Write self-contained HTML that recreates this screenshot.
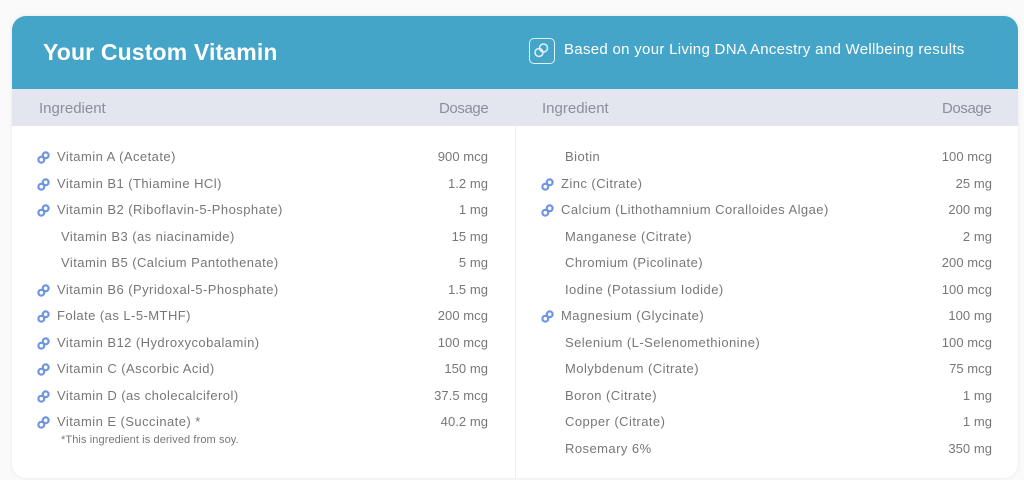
<!DOCTYPE html>
<html><head><style>
body{margin:0;width:1024px;height:480px;background:#fafafa;font-family:"Liberation Sans",sans-serif;position:relative;overflow:hidden}
.card{position:absolute;left:12px;top:16px;width:1006px;height:462px;background:#fff;border-radius:14px;box-shadow:0 0 4px rgba(0,0,0,.08);overflow:hidden}
.hd{position:absolute;left:0;top:0;width:1006px;height:73px;background:#45a5c8}
.title{position:absolute;left:31px;top:23px;color:#fff;font-size:23px;font-weight:bold;letter-spacing:0.15px}
.sub{position:absolute;left:552px;top:25px;color:#fff;font-size:15px;letter-spacing:0.3px}
.sicon{position:absolute;left:517px;top:22px;width:26px;height:26px;border:1.5px solid #dff1f8;border-radius:5px;box-sizing:border-box}
.band{position:absolute;left:0;top:73px;width:1006px;height:37px;background:#e3e6ee}
.th{position:absolute;top:84px;color:#8a8f99;font-size:15px;line-height:17px}
.div{position:absolute;left:503px;top:110px;width:1px;height:352px;background:#eceef2}
.r{position:absolute;font-size:13px;color:#777;line-height:14px;letter-spacing:0.45px;white-space:nowrap}
.d{position:absolute;font-size:13px;color:#777;text-align:right;width:120px;line-height:14px;letter-spacing:0.05px}
.ic{position:absolute;width:13px;height:13px}
</style></head><body>
<div class="card">
<div class="hd"></div>
<div class="title">Your Custom Vitamin</div>
<div class="sicon"><svg width="23" height="23" viewBox="0 0 23 23" style="position:absolute;left:0;top:0"><circle cx="9" cy="13.5" r="4" fill="none" stroke="#dff1f8" stroke-width="1.5"/><circle cx="13.5" cy="9" r="4" fill="none" stroke="#dff1f8" stroke-width="1.5"/></svg></div>
<div class="sub">Based on your Living DNA Ancestry and Wellbeing results</div>
<div class="band"></div>
<div class="th" style="left:27px">Ingredient</div>
<div class="th" style="left:427px;letter-spacing:-0.4px">Dosage</div>
<div class="th" style="left:530px">Ingredient</div>
<div class="th" style="left:930px;letter-spacing:-0.4px">Dosage</div>
<div class="div"></div>
</div>
<div id="rows"></div>
<script>
var L=[[1,"Vitamin A (Acetate)","900 mcg"],[1,"Vitamin B1 (Thiamine HCl)","1.2 mg"],[1,"Vitamin B2 (Riboflavin-5-Phosphate)","1 mg"],[0,"Vitamin B3 (as niacinamide)","15 mg"],[0,"Vitamin B5 (Calcium Pantothenate)","5 mg"],[1,"Vitamin B6 (Pyridoxal-5-Phosphate)","1.5 mg"],[1,"Folate (as L-5-MTHF)","200 mcg"],[1,"Vitamin B12 (Hydroxycobalamin)","100 mcg"],[1,"Vitamin C (Ascorbic Acid)","150 mg"],[1,"Vitamin D (as cholecalciferol)","37.5 mcg"],[1,"Vitamin E (Succinate) *","40.2 mg"]];
var R=[[0,"Biotin","100 mcg"],[1,"Zinc (Citrate)","25 mg"],[1,"Calcium (Lithothamnium Coralloides Algae)","200 mg"],[0,"Manganese (Citrate)","2 mg"],[0,"Chromium (Picolinate)","200 mcg"],[0,"Iodine (Potassium Iodide)","100 mcg"],[1,"Magnesium (Glycinate)","100 mg"],[0,"Selenium (L-Selenomethionine)","100 mcg"],[0,"Molybdenum (Citrate)","75 mcg"],[0,"Boron (Citrate)","1 mg"],[0,"Copper (Citrate)","1 mg"],[0,"Rosemary 6%","350 mg"]];
var ic='<svg width="13" height="13" viewBox="0 0 13 13"><circle cx="4.3" cy="8.7" r="2.9" fill="none" stroke="#6f95e0" stroke-width="2.2"/><circle cx="8.7" cy="4.3" r="2.9" fill="none" stroke="#6f95e0" stroke-width="2.2"/></svg>';
var h='';
function col(a,x0,dr){a.forEach(function(r,i){var y=150+i*26.5;
if(r[0])h+='<div class="ic" style="left:'+(x0-20)+'px;top:'+(y+1)+'px">'+ic+'</div>';
h+='<div class="r" style="left:'+(r[0]?x0:x0+4)+'px;top:'+y+'px">'+r[1]+'</div>';
h+='<div class="d" style="left:'+(dr-120)+'px;top:'+y+'px">'+r[2]+'</div>';});}
col(L,57,488);col(R,561,992);
h+='<div class="r" style="left:61px;top:433px;font-size:11px;letter-spacing:0.1px">*This ingredient is derived from soy.</div>';
document.getElementById('rows').innerHTML=h;
</script>
</body></html>
